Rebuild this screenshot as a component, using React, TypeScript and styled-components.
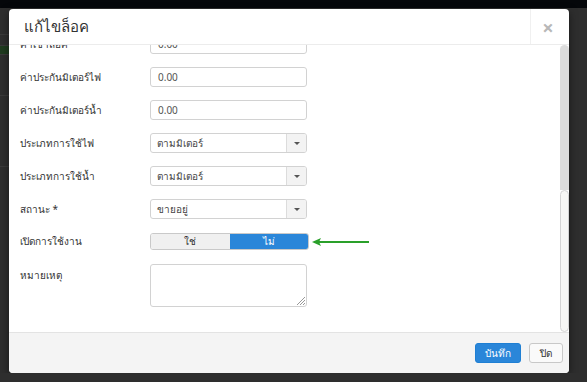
import styled, {createGlobalStyle} from "styled-components";

const GlobalStyle = createGlobalStyle`
  html, body {
    margin: 0;
    padding: 0;
    background: #2e2e2e;
    font-family: "Noto Sans", "Liberation Sans", sans-serif;
  }
`

const TopStrip = styled.div`
  height: 8px;
  background: #05070a;
`

const Stage = styled.div`
  display: flex;
  align-items: flex-start;
  padding-top: 1px;
`

const PageSlice = styled.div`
  width: 9px;
  display: flex;
  flex-direction: column;
`

const SliceRow = styled.div<{ $h: number; $bg?: string }>`
  height: ${p => p.$h}px;
  background: ${p => p.$bg || 'transparent'};
  border-bottom: 1px solid #3a3a3a;
`

const Modal = styled.div`
  width: 560px;
  height: 364px;
  background: #fff;
  border-radius: 4px;
  box-shadow: 0 3px 9px rgba(0, 0, 0, 0.5);
  display: flex;
  flex-direction: column;
  overflow: hidden;
`

const Header = styled.div`
  height: 35px;
  display: flex;
  border-bottom: 1px solid #ececec;
  flex-shrink: 0;
`

const Title = styled.h4`
  flex: 1;
  margin: 0;
  padding-left: 15px;
  display: flex;
  align-items: center;
  font-size: 15px;
  font-weight: normal;
  color: #333;
`

const CloseX = styled.div`
  width: 39px;
  border-left: 1px solid #f0f0f0;
  display: flex;
  align-items: center;
  justify-content: center;
  color: #b8b8b8;
  font-size: 20px;
  font-weight: bold;
  padding-top: 2px;
  padding-right: 4px;
  box-sizing: border-box;
`

const Body = styled.div`
  flex: 1;
  display: flex;
  min-height: 0;
`

const Content = styled.div`
  flex: 1;
  overflow: hidden;
  padding: 0 0 25px 11px;
`

const Inner = styled.div`
  margin-top: -11px;
`

const Rail = styled.div`
  width: 9px;
  display: flex;
  flex-direction: column;
`

const RailTrack = styled.div`
  height: 145px;
  background: #dcdcdc;
  border-radius: 5px 5px 0 0;
`

const RailThumb = styled.div`
  flex: 1;
  background: #f7f7f5;
  border: 1px solid #d4d4d4;
  border-radius: 5px;
`

const Row = styled.div<{ $top?: boolean; $gap?: number }>`
  display: flex;
  align-items: ${p => (p.$top ? 'flex-start' : 'center')};
  margin-bottom: ${p => p.$gap ?? 13}px;
`

const Label = styled.label<{ $top?: boolean }>`
  width: 130px;
  font-size: 10px;
  color: #333;
  padding-top: ${p => (p.$top ? '4px' : '0')};
`

const Input = styled.div`
  width: 157px;
  height: 20px;
  box-sizing: border-box;
  border: 1px solid #d2d2d2;
  border-radius: 3px;
  padding: 0 7px;
  display: flex;
  align-items: center;
  font-size: 10px;
  color: #555;
`

const Select = styled.div`
  width: 157px;
  height: 20px;
  box-sizing: border-box;
  border: 1px solid #d2d2d2;
  border-radius: 3px;
  display: flex;
  font-size: 10px;
  color: #444;
  overflow: hidden;
`

const SelectText = styled.div`
  flex: 1;
  display: flex;
  align-items: center;
  padding-left: 6px;
`

const Caret = styled.div`
  width: 19px;
  background: #f3f3f3;
  border-left: 1px solid #dcdcdc;
  display: flex;
  align-items: center;
  justify-content: center;

  &::after {
    content: "";
    border-left: 3px solid transparent;
    border-right: 3px solid transparent;
    border-top: 3px solid #555;
  }
`

const ToggleWrap = styled.div`
  display: flex;
  align-items: center;
`

const Toggle = styled.div`
  width: 159px;
  height: 17px;
  display: flex;
  border-radius: 3px;
  overflow: hidden;
  border: 1px solid #c9c9c9;
  box-sizing: border-box;
`

const ToggleOption = styled.div<{ $active?: boolean }>`
  flex: 1;
  display: flex;
  align-items: center;
  justify-content: center;
  font-size: 10px;
  background: ${p => (p.$active ? '#2a86d9' : '#f0f0f0')};
  color: ${p => (p.$active ? '#fff' : '#333')};
`

const TextArea = styled.div`
  width: 157px;
  height: 43px;
  box-sizing: border-box;
  border: 1px solid #d2d2d2;
  border-radius: 3px;
  display: flex;
  align-items: flex-end;
  justify-content: flex-end;
  padding: 1px;
`

const Footer = styled.div`
  height: 40px;
  flex-shrink: 0;
  background: #f4f4f4;
  border-top: 1px solid #e3e3e3;
  display: flex;
  align-items: center;
  justify-content: flex-end;
  gap: 8px;
  padding-right: 6px;
`

const Button = styled.button<{ $primary?: boolean }>`
  height: 20px;
  padding: 0 ${p => (p.$primary ? 9 : 10)}px;
  font-family: inherit;
  font-size: 10px;
  border-radius: 3px;
  border: 1px solid ${p => (p.$primary ? '#1f7fd3' : '#c8c8c8')};
  background: ${p => (p.$primary ? '#2a86d9' : '#fafafa')};
  color: ${p => (p.$primary ? '#fff' : '#333')};
`

const App = () => {
  return (
    <>
      <GlobalStyle/>
      <TopStrip/>
      <Stage>
        <PageSlice>
          <SliceRow $h={25}/>
          <SliceRow $h={10}/>
          <SliceRow $h={8} $bg="#1f3b1f"/>
          <SliceRow $h={40}/>
          <SliceRow $h={70}/>
        </PageSlice>
        <Modal>
          <Header>
            <Title>แก้ไขล็อค</Title>
            <CloseX>×</CloseX>
          </Header>
          <Body>
            <Content>
              <Inner>
                <Row>
                  <Label>ค่าเช่าล็อค</Label>
                  <Input>0.00</Input>
                </Row>
                <Row>
                  <Label>ค่าประกันมิเตอร์ไฟ</Label>
                  <Input>0.00</Input>
                </Row>
                <Row>
                  <Label>ค่าประกันมิเตอร์น้ำ</Label>
                  <Input>0.00</Input>
                </Row>
                <Row>
                  <Label>ประเภทการใช้ไฟ</Label>
                  <Select><SelectText>ตามมิเตอร์</SelectText><Caret/></Select>
                </Row>
                <Row>
                  <Label>ประเภทการใช้น้ำ</Label>
                  <Select><SelectText>ตามมิเตอร์</SelectText><Caret/></Select>
                </Row>
                <Row $gap={14}>
                  <Label>สถานะ *</Label>
                  <Select><SelectText>ขายอยู่</SelectText><Caret/></Select>
                </Row>
                <Row $gap={14}>
                  <Label>เปิดการใช้งาน</Label>
                  <ToggleWrap>
                    <Toggle>
                      <ToggleOption>ใช่</ToggleOption>
                      <ToggleOption $active>ไม่</ToggleOption>
                    </Toggle>
                    <svg width="58" height="10" viewBox="0 0 58 10" style={{marginLeft: 3}}>
                      <path d="M3 5 H57" stroke="#2aa02a" strokeWidth="2"/>
                      <path d="M0 5 L9 1 L7 5 L9 9 Z" fill="#2aa02a"/>
                    </svg>
                  </ToggleWrap>
                </Row>
                <Row $top $gap={0}>
                  <Label $top>หมายเหตุ</Label>
                  <TextArea>
                    <svg width="8" height="8" viewBox="0 0 8 8">
                      <path d="M8 0 L0 8 M8 3 L3 8 M8 6 L6 8" stroke="#999" strokeWidth="1"/>
                    </svg>
                  </TextArea>
                </Row>
              </Inner>
            </Content>
            <Rail>
              <RailTrack/>
              <RailThumb/>
            </Rail>
          </Body>
          <Footer>
            <Button $primary>บันทึก</Button>
            <Button>ปิด</Button>
          </Footer>
        </Modal>
      </Stage>
    </>
  );
}

export default App;
